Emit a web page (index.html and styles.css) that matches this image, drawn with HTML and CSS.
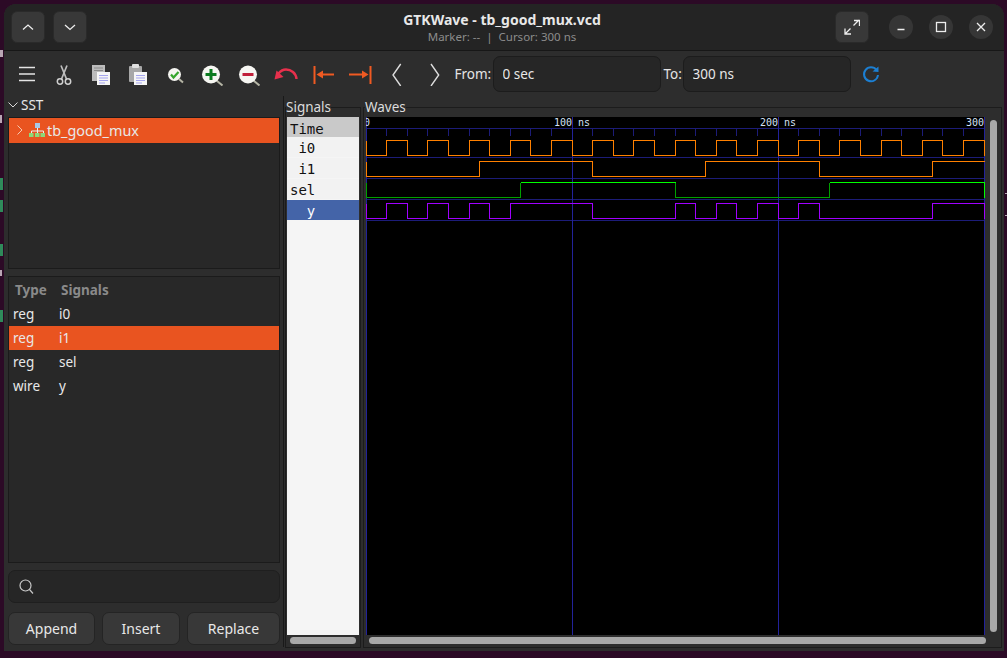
FILE: index.html
```html
<!DOCTYPE html>
<html>
<head>
    <title>GTKWave - tb_good_mux.vcd</title>
    <meta charset="UTF-8">
    <link rel="stylesheet" href="styles.css">
</head>
<body>
<div class="window">
    <header class="titlebar">
        <div class="title-left">
            <button class="head-btn"><svg width="16" height="16" viewBox="0 0 16 16"><path d="M3 10.5 8 6l5 4.5"/></svg></button>
            <button class="head-btn"><svg width="16" height="16" viewBox="0 0 16 16"><path d="M3 6l5 4.5L13 6"/></svg></button>
        </div>
        <div class="title-center">
            <div class="title">GTKWave - tb_good_mux.vcd</div>
            <div class="subtitle">Marker: -- &nbsp;|&nbsp; Cursor: 300 ns</div>
        </div>
        <div class="title-right">
            <button class="head-btn full-btn"><svg width="16" height="16" viewBox="0 0 16 16"><path d="M1 15 6.500 9.500M9.500 6.500 15 1M10 1.500h5.500V7M1 9.500V15h6"/></svg></button>
            <button class="win-btn"><svg width="12" height="12" viewBox="0 0 12 12"><path d="M2.5 8.5h7"/></svg></button>
            <button class="win-btn"><svg width="12" height="12" viewBox="0 0 12 12"><rect x="1.5" y="1.5" width="9" height="9"/></svg></button>
            <button class="win-btn"><svg width="12" height="12" viewBox="0 0 12 12"><path d="M2 2l8 8M10 2l-8 8"/></svg></button>
        </div>
    </header>

    <div class="toolbar">
        <span class="tool"><svg width="24" height="24" viewBox="0 0 24 24"><path d="M4 5.5h16M4 12h16M4 18.5h16" fill="none" stroke="#e4e4e4" stroke-width="1.5"/></svg></span>
        <span class="tool"><svg width="24" height="24" viewBox="0 0 24 24"><path d="M9 3.5 14.5 17M15 3.5 9.5 17" fill="none" stroke="#bdbdbd" stroke-width="1.7"/><circle cx="8" cy="19.5" r="2.7" fill="none" stroke="#d0d0d0" stroke-width="1.5"/><circle cx="16" cy="19.5" r="2.7" fill="none" stroke="#d0d0d0" stroke-width="1.5"/></svg></span>
        <span class="tool"><svg width="24" height="24" viewBox="0 0 24 24"><rect x="3" y="3" width="13" height="16" fill="#bcbcbc"/><path d="M5 6h9M5 8.500h9" stroke="#8a8a8a"/><rect x="8" y="10" width="13" height="13" fill="#f6f6f6"/><path d="M10 13.500h9M10 16h9M10 18.500h9M10 21h6" stroke="#a5a5ee"/></svg></span>
        <span class="tool"><svg width="24" height="24" viewBox="0 0 24 24"><rect x="3" y="4" width="13" height="16" rx="1" fill="#a8a8a8"/><rect x="6" y="2" width="7" height="4" rx="1" fill="#e0e0e0"/><rect x="8" y="10" width="13" height="13" fill="#f6f6f6"/><path d="M10 13.500h9M10 16h9M10 18.500h9M10 21h6" stroke="#a5a5ee"/></svg></span>
        <span class="tool"><svg width="24" height="24" viewBox="0 0 24 24"><path d="M16 17l4 3.500" stroke="#b5b5a5" stroke-width="2"/><circle cx="11.500" cy="12.500" r="6.500" fill="#f4f4f0"/><path d="M8 12.500l2.500 3L15.500 10" fill="none" stroke="#35a52d" stroke-width="2.200"/></svg></span>
        <span class="tool"><svg width="24" height="24" viewBox="0 0 24 24"><path d="M16.500 18.500l6 5" stroke="#b5b5a5" stroke-width="2"/><circle cx="11" cy="12.500" r="9" fill="#f6f6f2"/><path d="M5.500 12.500h11M11 7v11" stroke="#0b7b1f" stroke-width="3"/></svg></span>
        <span class="tool"><svg width="24" height="24" viewBox="0 0 24 24"><path d="M16.500 18.500l6 5" stroke="#b5b5a5" stroke-width="2"/><circle cx="11" cy="12.500" r="9" fill="#f6f6f2"/><path d="M5.500 12.500h11" stroke="#c0203a" stroke-width="3"/></svg></span>
        <span class="tool"><svg width="24" height="24" viewBox="0 0 24 24"><path d="M22.500 17C22 11 17 7.500 12 7.500 9 7.500 6.500 9 4.500 11.500" fill="none" stroke="#e7304c" stroke-width="2.400"/><path d="M.5 17.500 2.500 8.500 9.500 15z" fill="#e7304c"/></svg></span>
        <span class="tool"><svg width="24" height="24" viewBox="0 0 24 24"><path d="M3.500 4v18" stroke="#f05a22" stroke-width="2"/><path d="M8 12.500h15" stroke="#f05a22" stroke-width="2"/><path d="M5.500 12.500 12 8.500v8z" fill="#f05a22"/></svg></span>
        <span class="tool"><svg width="24" height="24" viewBox="0 0 24 24"><path d="M22.500 4v18" stroke="#f05a22" stroke-width="2"/><path d="M1 12.500h15" stroke="#f05a22" stroke-width="2"/><path d="M20.500 12.500 14 8.500v8z" fill="#f05a22"/></svg></span>
        <span class="tool"><svg width="24" height="24" viewBox="0 0 24 24"><path d="M15.700 2 8 13l7.700 11" fill="none" stroke="#dcdcdc" stroke-width="1.400"/></svg></span>
        <span class="tool"><svg width="24" height="24" viewBox="0 0 24 24"><path d="M9 2l7.700 11L9 24" fill="none" stroke="#dcdcdc" stroke-width="1.400"/></svg></span>
        <label class="range-label from-label">From:</label>
        <input class="range-input" type="text" value="0 sec">
        <label class="range-label to-label">To:</label>
        <input class="range-input" type="text" value="300 ns">
        <span class="refresh"><svg width="20" height="20" viewBox="0 0 20 20"><path d="M15.600 6A7 7 0 1 0 17 11" fill="none" stroke="#1c7fd2" stroke-width="2"/><path d="M11.500 7.500 17.500 8V2.500z" fill="#1c7fd2"/></svg></span>
    </div>

    <div class="panes">
        <div class="left-col">
            <div class="sst-head">
                <svg width="10" height="6" viewBox="0 0 10 6"><path d="M.5.500 5 5 9.500.500" fill="none" stroke="#d8d8d8"/></svg>
                <span>SST</span>
            </div>
            <div class="tree-box">
                <div class="tree-row">
                    <svg class="tree-arrow" width="6" height="10" viewBox="0 0 6 10"><path d="M.5.500 5 5 .5 9.500" fill="none" stroke="#f5c8b0"/></svg>
                    <svg class="tree-icon" width="16" height="14" viewBox="0 0 16 14"><rect x="6" y="0" width="5" height="5" fill="#a8c8e8"/><path d="M8.500 5v3M2.500 10V8h12v2M8.500 8v2" fill="none" stroke="#eee"/><rect x="0" y="10" width="4.500" height="4" fill="#8fd878"/><rect x="6" y="10" width="4.500" height="4" fill="#8fd878"/><rect x="11.500" y="10" width="4.500" height="4" fill="#8fd878"/></svg>
                    <span>tb_good_mux</span>
                </div>
            </div>
            <div class="sig-box">
                <div class="sig-head"><span class="col-type">Type</span><span>Signals</span></div>
                <div class="sig-row"><span class="col-type">reg</span><span>i0</span></div>
                <div class="sig-row selected"><span class="col-type">reg</span><span>i1</span></div>
                <div class="sig-row"><span class="col-type">reg</span><span>sel</span></div>
                <div class="sig-row"><span class="col-type">wire</span><span>y</span></div>
            </div>
            <div class="search">
                <svg width="16" height="16" viewBox="0 0 16 16"><circle cx="6.500" cy="6.500" r="5.500" fill="none" stroke="#c8c8c8" stroke-width="1.200"/><path d="M10.500 10.500 14 14.500" stroke="#c8c8c8" stroke-width="1.200"/></svg>
            </div>
            <div class="actions">
                <button class="append">Append</button>
                <button class="insert">Insert</button>
                <button class="replace">Replace</button>
            </div>
        </div>

        <div class="divider"></div>

        <fieldset class="frame signals-frame">
            <legend>Signals</legend>
            <div class="name-list">
                <div class="name-row time-row">Time</div>
                <div class="name-row"> i0</div>
                <div class="name-row"> i1</div>
                <div class="name-row">sel</div>
                <div class="name-row active">  y</div>
            </div>
            <div class="hbar"><div class="thumb"></div></div>
        </fieldset>

        <fieldset class="frame waves-frame">
            <legend>Waves</legend>
            <div class="wave-main">
                <svg class="wave" width="619" height="518" viewBox="0 0 619 518">
                    <path class="grid" d="M0 11.500H619M0 40.500H619M0 61.500H619M0 82.500H619M0 103.500H619"/>
                    <path class="grid" d="M20.500 12v7M41.500 12v7M61.500 12v7M82.500 12v7M103.500 12v7M123.500 12v7M144.500 12v7M164.500 12v7M185.500 12v7M226.500 12v7M247.500 12v7M267.500 12v7M288.500 12v7M309.500 12v7M329.500 12v7M350.500 12v7M370.500 12v7M391.500 12v7M432.500 12v7M453.500 12v7M473.500 12v7M494.500 12v7M515.500 12v7M535.500 12v7M556.500 12v7M576.500 12v7M597.500 12v7"/>
                    <path class="major" d="M.5 0V518M206.500 0V518M412.500 0V518M618.500 0V518"/>
                    <text x="-2" y="9">0</text>
                    <text x="188" y="9">100</text>
                    <text x="212" y="9">ns</text>
                    <text x="394" y="9">200</text>
                    <text x="418" y="9">ns</text>
                    <text x="600" y="9">300</text>
                    <path class="sig-orange" d="M.5 23.500V38.500H20.500V23.500H41.500V38.500H61.500V23.500H82.500V38.500H103.500V23.500H123.500V38.500H144.500V23.500H164.500V38.500H185.500V23.500H206.500V38.500H226.500V23.500H247.500V38.500H267.500V23.500H288.500V38.500H309.500V23.500H329.500V38.500H350.500V23.500H370.500V38.500H391.500V23.500H412.500V38.500H432.500V23.500H453.500V38.500H473.500V23.500H494.500V38.500H515.500V23.500H535.500V38.500H556.500V23.500H576.500V38.500H597.500V23.500H618.500V38.500"/>
                    <path class="sig-orange" d="M.5 44.500V59.500H113.500V44.500H226.500V59.500H339.500V44.500H453.500V59.500H566.500V44.500H619"/>
                    <path class="sig-low" d="M.5 65.500V80.500H154.500V65.500M309.500 65.500V80.500H463.500V65.500"/>
                    <path class="sig-high" d="M154.500 65.500H309.500M463.500 65.500H618.500V80.500"/>
                    <path class="sig-purple" d="M.5 86.500V101.500H20.500V86.500H41.500V101.500H61.500V86.500H82.500V101.500H103.500V86.500H123.500V101.500H144.500V86.500H226.500V101.500H309.500V86.500H329.500V101.500H350.500V86.500H370.500V101.500H391.500V86.500H412.500V101.500H432.500V86.500H453.500V101.500H566.500V86.500H618.500V101.500"/>
                </svg>
                <div class="vbar"><div class="thumb"></div></div>
            </div>
            <div class="hbar"><div class="thumb"></div></div>
        </fieldset>
    </div>
</div>
</body>
</html>
```

FILE: styles.css
```css
* {
    box-sizing: border-box;
}

html, body {
    height: 100%;
}

/* the terminal behind the window only shows as a few marks at the edges */
body {
    margin: 0;
    overflow: hidden;
    padding: 4px 3px 7px 4px;
    font-family: "Noto Sans", sans-serif;
    color: #e8e8e8;
    background-color: #2c0a26;
    background-image:
        linear-gradient(#2f8a5a, #2f8a5a),
        linear-gradient(#2f8a5a, #2f8a5a),
        linear-gradient(#2f8a5a, #2f8a5a),
        linear-gradient(#2f8a5a, #2f8a5a),
        linear-gradient(#b9a6b4, #b9a6b4),
        linear-gradient(#b9a6b4, #b9a6b4),
        linear-gradient(#b9a6b4, #b9a6b4),
        linear-gradient(#b9a6b4, #b9a6b4),
        linear-gradient(#b9a6b4, #b9a6b4);
    background-repeat: no-repeat;
    background-size: 3px 12px, 3px 12px, 3px 12px, 3px 12px, 3px 7px, 2px 8px, 2px 6px, 2px 1px, 2px 1px;
    background-position: 0 178px, 0 200px, 0 244px, 0 310px, 0 50px, 0 115px, 0 270px, 1005px 193px, 1005px 215px;
}

button, input {
    font: inherit;
    color: inherit;
}

.window {
    height: 100%;
    display: flex;
    flex-direction: column;
    background: #2d2d2d;
    border-radius: 12px 12px 0 0;
    overflow: hidden;
}

/* title bar */
.titlebar {
    height: 47px;
    flex: none;
    display: grid;
    grid-template-columns: 1fr auto 1fr;
    align-items: center;
    padding: 0 11px 0 7px;
    background: #242424;
    border-bottom: 1px solid #171717;
}

.title-left, .title-right {
    display: flex;
    align-items: center;
}

.title-left {
    gap: 8px;
}

.title-right {
    justify-content: flex-end;
}

.head-btn {
    width: 34px;
    height: 32px;
    padding: 0;
    display: flex;
    align-items: center;
    justify-content: center;
    background: #383838;
    border: 1px solid #2a2a2a;
    border-radius: 6px;
}

.head-btn path, .win-btn path, .win-btn rect {
    fill: none;
    stroke: #ededed;
    stroke-width: 1.3;
}

.full-btn {
    margin-right: 4px;
}

.win-btn {
    width: 24px;
    height: 24px;
    padding: 0;
    margin-left: 16px;
    display: flex;
    align-items: center;
    justify-content: center;
    background: #363636;
    border: none;
    border-radius: 50%;
}

.title-center {
    text-align: center;
}

.title {
    font-size: 14px;
    font-weight: 700;
    line-height: 18px;
}

.subtitle {
    font-size: 11.5px;
    line-height: 15px;
    color: #8c8c8c;
}

/* toolbar */
.toolbar {
    height: 45px;
    flex: none;
    display: flex;
    align-items: center;
    padding-left: 4.500px;
    font-size: 13.500px;
}

.tool {
    width: 37px;
    height: 24px;
    display: flex;
    justify-content: center;
}

.range-label {
    color: #e4e4e4;
}

.from-label {
    margin-left: 2px;
    width: 38px;
}

.to-label {
    margin-left: 3px;
    width: 19px;
}

.range-input {
    width: 168px;
    height: 36px;
    padding: 0 9px;
    background: #262626;
    border: 1px solid #1c1c1c;
    border-radius: 7px;
    outline: none;
}

.refresh {
    margin-left: 10px;
    height: 20px;
}

/* panes */
.panes {
    flex: 1;
    min-height: 0;
    display: flex;
    padding-right: 2px;
}

.left-col {
    width: 276px;
    flex: none;
    padding-left: 4px;
    display: flex;
    flex-direction: column;
}

.sst-head {
    height: 21px;
    flex: none;
    display: flex;
    align-items: center;
    gap: 3px;
    font-size: 13.500px;
    padding-bottom: 3px;
}

.tree-box {
    height: 152px;
    flex: none;
    margin-bottom: 7px;
    background: #282828;
    border: 1px solid #1b1b1b;
}

.tree-row {
    height: 25px;
    display: flex;
    align-items: center;
    padding: 0 0 1px 8px;
    font-size: 14.400px;
    background: #e95420;
}

.tree-arrow {
    margin-right: 6px;
}

.tree-icon {
    margin-right: 2px;
}

.sig-box {
    height: 287px;
    flex: none;
    margin-bottom: 7px;
    background: #282828;
    border: 1px solid #1b1b1b;
    font-size: 13.500px;
}

.sig-head {
    height: 25px;
    display: flex;
    align-items: center;
    padding-left: 6px;
    font-weight: 700;
    color: #8a8a8a;
}

.sig-head .col-type {
    width: 46px;
}

.sig-row {
    height: 24px;
    display: flex;
    align-items: center;
    padding-left: 4px;
}

.col-type {
    width: 46px;
}

.sig-row.selected {
    background: #e95420;
}

.search {
    height: 33px;
    flex: none;
    display: flex;
    align-items: center;
    padding-left: 10px;
    margin-bottom: 9px;
    background: #262626;
    border: 1px solid #1f1f1f;
    border-radius: 7px;
}

.actions {
    display: flex;
    gap: 7px;
    height: 33px;
    flex: none;
}

.actions button {
    padding: 0;
    font-size: 14px;
    background: #383838;
    border: 1px solid #242424;
    border-radius: 7px;
}

.append {
    width: 87px;
}

.insert {
    width: 78px;
}

.replace {
    width: 93px;
}

.divider {
    width: 1px;
    flex: none;
    margin: 0 1px 4px 3px;
    background: #191919;
}

.frame {
    margin: 1px 0 3px;
    padding: 0 1px;
    min-width: 0;
    border: 1px solid #1c1c1c;
    font-size: 13.500px;
    display: flex;
    flex-direction: column;
}

.frame legend {
    padding: 0;
    line-height: 20px;
    color: #dcdcdc;
}

.signals-frame {
    width: 76px;
    flex: none;
    margin-right: 2px;
}

.signals-frame legend {
    margin-left: -1px;
}

.waves-frame {
    flex: 1;
}

.name-list {
    height: 518px;
    flex: none;
    background: #f5f5f5;
    font-family: "DejaVu Sans Mono", monospace;
    font-size: 14px;
}

.name-row {
    height: 20px;
    margin-bottom: 1px;
    padding-left: 3px;
    line-height: 22px;
    color: #111;
    white-space: pre;
    background: #f2f2f2;
}

.time-row {
    margin-bottom: 0;
    line-height: 24px;
    background: #c9c9c9;
}

.name-row.active {
    color: #fff;
    background: #4464a8;
}

.wave-main {
    height: 518px;
    flex: none;
    display: flex;
}

.wave {
    display: block;
    flex: none;
    margin-left: 1px;
    background: #000;
    shape-rendering: crispEdges;
}

.wave path {
    fill: none;
}

.wave text {
    font-family: "DejaVu Sans Mono", monospace;
    font-size: 10px;
    fill: #d5e2f5;
}

.grid {
    stroke: #1c1c78;
}

.major {
    stroke: #22229a;
}

.sig-orange {
    stroke: #ff8000;
}

.sig-low {
    stroke: #00a000;
}

.sig-high {
    stroke: #00ff00;
}

.sig-purple {
    stroke: #a000ff;
}

.vbar {
    flex: 1;
    padding: 3px 0 3px 5px;
}

.vbar .thumb {
    width: 7px;
    height: 100%;
    background: #a8a8a8;
    border-radius: 4px;
}

.hbar {
    height: 12px;
    flex: none;
    padding: 2px 3px 0;
}

.hbar .thumb {
    height: 7px;
    background: #a8a8a8;
    border-radius: 4px;
}

.waves-frame .hbar {
    padding-left: 4px;
    padding-right: 14px;
}
```
